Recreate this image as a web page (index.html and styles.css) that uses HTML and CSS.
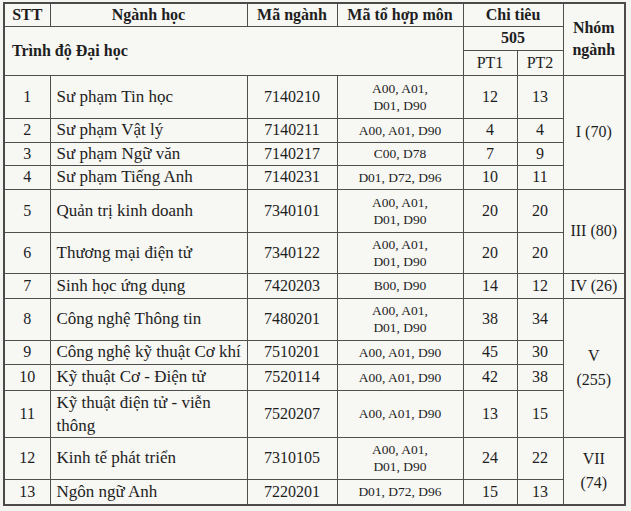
FILE: index.html
```html
<!DOCTYPE html>
<html lang="vi">
<head>
<meta charset="utf-8">
<title>Chỉ tiêu tuyển sinh</title>
<link rel="stylesheet" href="styles.css">
</head>
<body>
<table class="tbl">
  <colgroup>
    <col class="c-stt"><col class="c-name"><col class="c-code"><col class="c-combo"><col class="c-pt"><col class="c-pt2"><col class="c-group">
  </colgroup>
  <tr class="h1">
    <th>STT</th>
    <th>Ngành học</th>
    <th>Mã ngành</th>
    <th>Mã tổ hợp môn</th>
    <th colspan="2">Chi tiêu</th>
    <th rowspan="3" class="grp-h">Nhóm<br>ngành</th>
  </tr>
  <tr class="h2">
    <th colspan="4" rowspan="2" class="level">Trình độ Đại học</th>
    <th colspan="2">505</th>
  </tr>
  <tr class="h3">
    <td class="pt">PT1</td>
    <td class="pt">PT2</td>
  </tr>
  <tr class="r2l">
    <td class="num">1</td><td class="name">Sư phạm Tin học</td><td class="num">7140210</td>
    <td class="combo">A00, A01,<br>D01, D90</td><td class="num">12</td><td class="num">13</td>
    <td rowspan="4" class="grp">I (70)</td>
  </tr>
  <tr class="r1l">
    <td class="num">2</td><td class="name">Sư phạm Vật lý</td><td class="num">7140211</td>
    <td class="combo">A00, A01, D90</td><td class="num">4</td><td class="num">4</td>
  </tr>
  <tr class="r1s">
    <td class="num">3</td><td class="name">Sư phạm Ngữ văn</td><td class="num">7140217</td>
    <td class="combo">C00, D78</td><td class="num">7</td><td class="num">9</td>
  </tr>
  <tr class="r1l">
    <td class="num">4</td><td class="name">Sư phạm Tiếng Anh</td><td class="num">7140231</td>
    <td class="combo">D01, D72, D96</td><td class="num">10</td><td class="num">11</td>
  </tr>
  <tr class="r2l">
    <td class="num">5</td><td class="name">Quản trị kinh doanh</td><td class="num">7340101</td>
    <td class="combo">A00, A01,<br>D01, D90</td><td class="num">20</td><td class="num">20</td>
    <td rowspan="2" class="grp">III (80)</td>
  </tr>
  <tr class="r2s">
    <td class="num">6</td><td class="name">Thương mại điện tử</td><td class="num">7340122</td>
    <td class="combo">A00, A01,<br>D01, D90</td><td class="num">20</td><td class="num">20</td>
  </tr>
  <tr class="r1l">
    <td class="num">7</td><td class="name">Sinh học ứng dụng</td><td class="num">7420203</td>
    <td class="combo">B00, D90</td><td class="num">14</td><td class="num">12</td>
    <td class="grp">IV (26)</td>
  </tr>
  <tr class="r2m">
    <td class="num">8</td><td class="name">Công nghệ Thông tin</td><td class="num">7480201</td>
    <td class="combo">A00, A01,<br>D01, D90</td><td class="num">38</td><td class="num">34</td>
    <td rowspan="4" class="grp">V<br>(255)</td>
  </tr>
  <tr class="r1l">
    <td class="num">9</td><td class="name">Công nghệ kỹ thuật Cơ khí</td><td class="num">7510201</td>
    <td class="combo">A00, A01, D90</td><td class="num">45</td><td class="num">30</td>
  </tr>
  <tr class="r1t">
    <td class="num">10</td><td class="name">Kỹ thuật Cơ - Điện tử</td><td class="num">7520114</td>
    <td class="combo">A00, A01, D90</td><td class="num">42</td><td class="num">38</td>
  </tr>
  <tr class="r2n">
    <td class="num">11</td><td class="name two">Kỹ thuật điện tử - viễn<br>thông</td><td class="num">7520207</td>
    <td class="combo">A00, A01, D90</td><td class="num">13</td><td class="num">15</td>
  </tr>
  <tr class="r2m">
    <td class="num">12</td><td class="name">Kinh tế phát triển</td><td class="num">7310105</td>
    <td class="combo">A00, A01,<br>D01, D90</td><td class="num">24</td><td class="num">22</td>
    <td rowspan="2" class="grp">VII<br>(74)</td>
  </tr>
  <tr class="r1t">
    <td class="num">13</td><td class="name">Ngôn ngữ Anh</td><td class="num">7220201</td>
    <td class="combo">D01, D72, D96</td><td class="num">15</td><td class="num">13</td>
  </tr>
</table>
</body>
</html>
```

FILE: styles.css
```css
html, body {
  margin: 0;
  padding: 0;
  background: #f4f4f1;
}
body {
  padding: 2px 0 0 3px;
  font-family: "Liberation Serif", "Times New Roman", serif;
  color: #1e1e1e;
}
.tbl {
  border-collapse: collapse;
  table-layout: fixed;
  width: 621px;
  background: #f7f7f4;
  border: 2px solid #4a4a4a;
}
.c-stt { width: 46px; }
.c-name { width: 197px; }
.c-code { width: 90px; }
.c-combo { width: 126px; }
.c-pt { width: 54px; }
.c-pt2 { width: 46px; }
.c-group { width: 62px; }

.tbl th, .tbl td {
  border: 1px solid #4e4e4e;
  padding: 0;
  vertical-align: middle;
  text-align: center;
  line-height: 20px;
}
.tbl th {
  font-weight: bold;
  font-size: 16px;
}
.h1 { height: 23px; }
.h2 { height: 24px; }
.h3 { height: 25px; }
.tbl .level {
  text-align: left;
  padding-left: 7px;
}
.tbl .grp-h { line-height: 22px; }
.tbl .pt { font-size: 16px; }
.r1l { height: 24px; }
.r1s { height: 23px; }
.r1t { height: 26px; }
.r2l { height: 43px; }
.r2m { height: 42px; }
.r2s { height: 41px; }
.r2n { height: 47px; }
.tbl .num { font-size: 16px; }
.tbl .name {
  text-align: left;
  padding-left: 6px;
  font-size: 17px;
}
.tbl .name.two { line-height: 23px; }
.tbl .combo {
  font-size: 13.5px;
  line-height: 17px;
}
.tbl .grp {
  font-size: 16px;
  line-height: 24px;
}
```
